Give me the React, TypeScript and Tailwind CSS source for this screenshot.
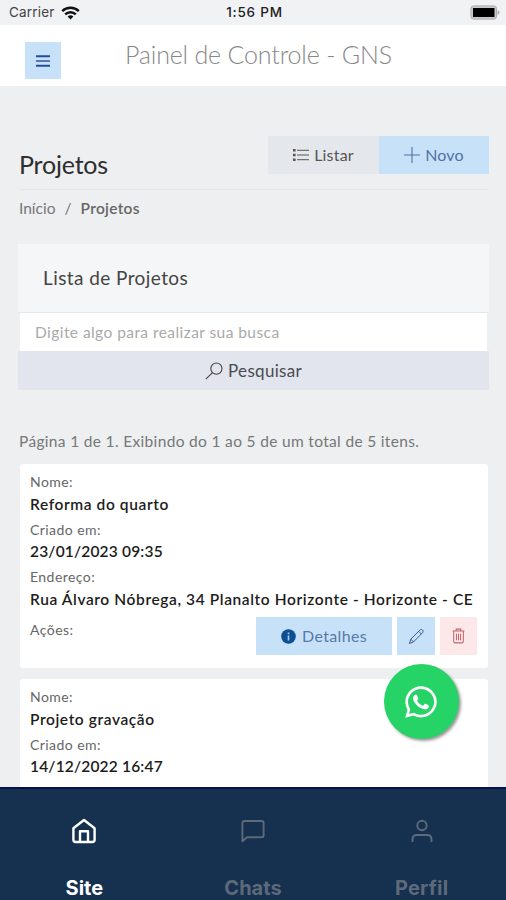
import { FaWhatsapp } from "react-icons/fa";

type Project = {
    name: string;
    createdAt: string;
    address?: string;
};

const projects: Project[] = [
    {
        name: "Reforma do quarto",
        createdAt: "23/01/2023 09:35",
        address: "Rua Álvaro Nóbrega, 34 Planalto Horizonte - Horizonte - CE",
    },
    {
        name: "Projeto gravação",
        createdAt: "14/12/2022 16:47",
    },
];

function StatusBar() {
    return (
        <div className="grid h-[25px] shrink-0 grid-cols-3 items-center bg-[#f1f2f4] pr-[6px] pl-[9px] font-['Inter',sans-serif] text-[13.5px] text-[#222]">
            <div className="flex items-center gap-[6px]">
                <span className="tracking-[0.2px] text-[#444]">Carrier</span>
                <svg width="19" height="14" viewBox="0 0 19 14" fill="none" stroke="#111" strokeWidth="2.4">
                    <path d="M1.2 5.2a11.8 11.8 0 0 1 16.6 0" />
                    <path d="M4.2 8.4a7.5 7.5 0 0 1 10.6 0" />
                    <path d="M9.5 13.4 6.6 10.6a4.1 4.1 0 0 1 5.8 0z" fill="#111" stroke="none" />
                </svg>
            </div>
            <span className="text-center font-medium tracking-[0.8px]">1:56 PM</span>
            <svg className="justify-self-end" width="30" height="15" viewBox="0 0 30 15">
                <rect x="0.9" y="0.9" width="25.6" height="13.2" rx="2.6" fill="#c9c9c9" stroke="#aaa" />
                <rect x="3" y="3" width="21.5" height="9" fill="#000" />
                <path d="M27.6 5v5l1.8-1.5v-2z" fill="#aaa" />
            </svg>
        </div>
    );
}

function Header() {
    return (
        <header className="flex h-[61px] shrink-0 items-start bg-white pl-[25px]">
            <button type="button" className="mt-[17px] flex h-[37px] w-[36px] items-center justify-center bg-[#c7e2f8]">
                <svg width="14" height="12" viewBox="0 0 14 12" stroke="#244f98" strokeWidth="2">
                    <path d="M0 1.2h14M0 10.8h14" />
                    <path d="M0 6h14" stroke="#5679b4" />
                </svg>
            </button>
            <h1 className="mt-[11px] ml-[64px] text-[25px] leading-[36px] font-light tracking-[-0.18px] text-[#888]">
                Painel de Controle - GNS
            </h1>
        </header>
    );
}

function InfoIcon() {
    return (
        <svg width="15" height="15" viewBox="0 0 15 15">
            <circle cx="7.5" cy="7.5" r="7.3" fill="#0c4f93" />
            <path d="M7.5 6.4v5M7.5 3.4v1.8" stroke="#a9c8e6" strokeWidth="1.7" />
        </svg>
    );
}

function PencilIcon() {
    return (
        <svg width="17" height="17" viewBox="0 0 18 18" fill="none" stroke="#31578f" strokeWidth="1" strokeLinejoin="round">
            <path d="M1.5 16.5 3 11.8 12.6 2.2c.8-.8 2-.8 2.8 0 .8.8.8 2 0 2.8L5.8 14.8z" />
            <path d="m3 11.8 2.8 3M11.3 3.5l2.9 2.9" />
        </svg>
    );
}

function TrashIcon() {
    return (
        <svg width="13" height="16" viewBox="0 0 14 17" fill="none" stroke="#c0646a" strokeWidth="1.1">
            <path d="M.7 3.2h12.6M4.5 3V1.1h5V3M1.8 3.4v11.1c0 .9.5 1.4 1.4 1.4h7.6c.9 0 1.4-.5 1.4-1.4V3.4" />
            <path d="M4.8 6.2v6.8M7 6.2v6.8M9.2 6.2v6.8" />
        </svg>
    );
}

function ProjectCard({ project }: { project: Project }) {
    const label = "text-[14px] leading-[22px] tracking-[0.45px] text-[#666]";
    const value = "text-[15.5px] font-semibold text-[#1c1c1c] whitespace-nowrap";

    return (
        <article className="h-[204px] shrink-0 rounded-[3px] bg-white pt-[7px] pr-[11px] pl-[10px]">
            <div className="mb-[4px]">
                <p className={label}>Nome:</p>
                <p className={`${value} leading-[22px] tracking-[0.6px]`}>{project.name}</p>
            </div>
            <div className="mb-[4px]">
                <p className={label}>Criado em:</p>
                <p className={`${value} leading-[21px] tracking-[0.18px]`}>{project.createdAt}</p>
            </div>
            {project.address && (
                <>
                    <div>
                        <p className={label}>Endereço:</p>
                        <p className={`${value} leading-[23px] tracking-[0.61px]`}>{project.address}</p>
                    </div>
                    <div className="mt-[6px] flex items-start">
                        <p className={`${label} mt-[2px] flex-1`}>Ações:</p>
                        <div className="flex gap-[5px]">
                            <button type="button" className="flex h-[38px] w-[136px] items-center justify-center gap-[6px] bg-[#c7e2f8] text-[16px] tracking-[0.35px] text-[#5779aa]">
                                <InfoIcon />
                                Detalhes
                            </button>
                            <button type="button" className="flex h-[38px] w-[38px] items-center justify-center bg-[#c7e2f8]">
                                <PencilIcon />
                            </button>
                            <button type="button" className="flex h-[38px] w-[37px] items-center justify-center bg-[#fce8e8]">
                                <TrashIcon />
                            </button>
                        </div>
                    </div>
                </>
            )}
        </article>
    );
}

function TabBar() {
    return (
        <nav className="grid h-[113px] shrink-0 grid-cols-3 border-t-2 border-[#07124a] bg-[#16304f] font-['Inter',sans-serif] text-[20px] leading-[24px] font-bold text-[#5d6a79]">
            <div className="flex flex-col items-center pt-[28px] text-white">
                <svg width="28" height="28" viewBox="0 0 28 28" fill="none" stroke="currentColor" strokeWidth="2.4" strokeLinejoin="round">
                    <path d="M3.4 11.2 14 3l10.6 8.2v11.6c0 1.4-.9 2.2-2.2 2.2H5.6c-1.3 0-2.2-.8-2.2-2.2z" />
                    <path d="M10 25V14.2h8V25" />
                </svg>
                <span className="mt-[31px]">Site</span>
            </div>
            <div className="flex flex-col items-center pt-[28px]">
                <svg width="28" height="28" viewBox="0 0 28 28" fill="none" stroke="currentColor" strokeWidth="1.9" strokeLinejoin="round">
                    <path d="M5.4 4h17.2c1.2 0 2 .8 2 2v12.2c0 1.2-.8 2-2 2H8l-4.6 4V6c0-1.2.8-2 2-2z" />
                </svg>
                <span className="mt-[31px]">Chats</span>
            </div>
            <div className="flex flex-col items-center pt-[28px]">
                <svg width="28" height="28" viewBox="0 0 28 28" fill="none" stroke="currentColor" strokeWidth="1.9">
                    <circle cx="14" cy="8.5" r="4.7" />
                    <path d="M4.5 25v-2.6c0-2.8 1.7-4.4 4.5-4.4h10c2.8 0 4.5 1.6 4.5 4.4V25" />
                </svg>
                <span className="mt-[31px] tracking-[0.2px]">Perfil</span>
            </div>
        </nav>
    );
}

export default function App() {
    return (
        <div className="relative flex h-[900px] w-[506px] flex-col overflow-hidden bg-[#edeff1] font-['Lato',sans-serif]">
            <StatusBar />
            <Header />

            <main className="flex min-h-0 flex-1 flex-col overflow-hidden pt-[50px] pr-[17px] pl-[18px]">
                <div className="mx-px flex h-[54px] shrink-0 items-start justify-between border-b border-[#e3e5e8]">
                    <h2 className="mt-[11px] text-[25px] leading-[34px] tracking-[-0.2px] text-[#2e2e2e]">Projetos</h2>
                    <div className="-mr-px flex text-[16px] tracking-[0.2px]">
                        <button type="button" className="flex h-[38px] w-[111px] items-center justify-center gap-[5px] bg-[#e4e7ec] text-[#555]">
                            <svg width="16" height="12" viewBox="0 0 16 12" stroke="#555">
                                <path d="M0 1.3h2.6M0 6h2.6M0 10.7h2.6" strokeWidth="2.4" />
                                <path d="M4 1.3h12M4 6h12M4 10.7h12" strokeWidth="1" />
                            </svg>
                            Listar
                        </button>
                        <button type="button" className="flex h-[38px] w-[110px] items-center justify-center gap-[5px] bg-[#c7e2f8] text-[#5272a6]">
                            <svg width="16" height="16" viewBox="0 0 16 16" stroke="#5272a6" strokeWidth="1.1">
                                <path d="M8 0v16M0 8h16" />
                            </svg>
                            Novo
                        </button>
                    </div>
                </div>

                <div className="mt-[7px] ml-px flex h-[22px] shrink-0 gap-[9px] text-[15.5px] leading-[22px] text-[#777]">
                    <span>Início</span>
                    <span>/</span>
                    <span className="font-semibold tracking-[0.3px] text-[#666]">Projetos</span>
                </div>

                <section className="mt-[25px] h-[146px] shrink-0">
                    <h3 className="h-[69px] border-b border-[#e5e8eb] bg-[#f5f6f8] pl-[25px] text-[19px] leading-[67px] tracking-[0.42px] text-[#444]">
                        Lista de Projetos
                    </h3>
                    <input
                        type="text"
                        placeholder="Digite algo para realizar sua busca"
                        className="mx-[2px] block h-[38px] w-[467px] bg-white pl-[15px] text-[15.5px] tracking-[0.44px] outline-none placeholder:text-[#a9a9a9]"
                    />
                    <button type="button" className="flex h-[39px] w-full items-center justify-center gap-[5px] bg-[#e2e5ed] text-[17px] tracking-[0.3px] text-[#4a4c52]">
                        <svg width="18" height="18" viewBox="0 0 18 18" fill="none" stroke="#444" strokeWidth="1.1">
                            <circle cx="11.4" cy="6.6" r="5.6" />
                            <path d="M7.5 10.6.8 17.2" />
                        </svg>
                        Pesquisar
                    </button>
                </section>

                <p className="mt-[40px] ml-px shrink-0 text-[15.5px] leading-[22px] tracking-[0.33px] text-[#777]">
                    Página 1 de 1. Exibindo do 1 ao 5 de um total de 5 itens.
                </p>

                <div className="mt-[12px] mr-px ml-[2px] flex flex-col gap-[11px]">
                    {projects.map((project) => (
                        <ProjectCard key={project.name} project={project} />
                    ))}
                </div>
            </main>

            <TabBar />

            {/* floating WhatsApp shortcut */}
            <a className="absolute top-[664px] left-[384px] flex size-[75px] items-center justify-center rounded-full bg-[#25d366] pr-px text-white shadow-[2px_2px_3px_#999]">
                <FaWhatsapp className="size-[36px]" />
            </a>
        </div>
    );
}
